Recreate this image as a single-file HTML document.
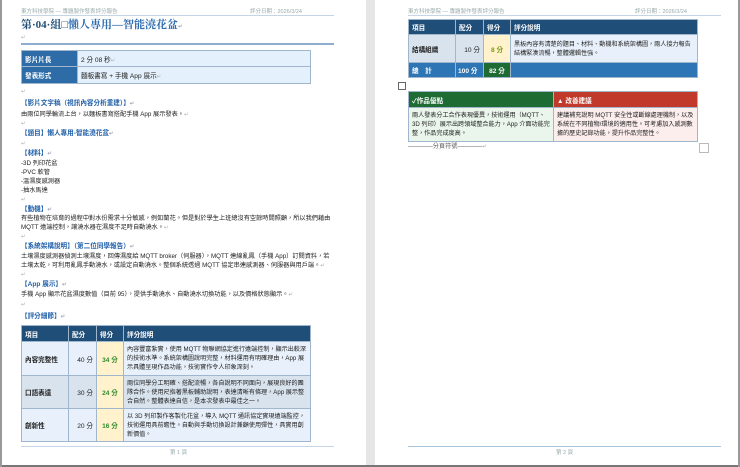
<!DOCTYPE html>
<html><head><meta charset="utf-8"><style>
*{margin:0;padding:0;box-sizing:border-box}
body{width:740px;height:467px;background:#e6e6e6;position:relative;overflow:hidden;font-family:"Liberation Sans","Noto Sans CJK TC",sans-serif;color:#222}
.pg{position:absolute;top:0;height:465px;background:#fff}
.a{position:absolute;white-space:nowrap}
.t{font-size:6.2px;line-height:8px;color:#222}
.h{font-size:6.6px;line-height:8px;font-weight:bold;color:#1f5fa8}
.hd{font-size:5.5px;color:#9aa}
.ln{position:absolute;height:1px;background:#a9c3dc}
.pm{color:#aab;font-size:5.5px}
table{border-collapse:collapse;position:absolute;font-size:6.6px;table-layout:fixed}
td{border:1px solid #9fb6cc;padding:0 3px;vertical-align:middle;white-space:nowrap;overflow:hidden}
td.w{white-space:normal;font-size:6.1px;line-height:9px;font-weight:normal}
.nv{background:#1f4e79;color:#fff;font-weight:bold}
.g{color:#2e8b2e;font-weight:bold;text-align:center;background:#fff2cc}
.sq{position:absolute;width:10px;height:10px;border:1px solid #bbb}
</style></head><body>
<div style="position:absolute;left:0;top:465px;width:740px;height:2px;background:#777"></div>
<div style="position:absolute;left:0;top:0;width:2px;height:467px;background:#999"></div>
<div style="position:absolute;left:738px;top:0;width:2px;height:467px;background:#999"></div>

<!-- PAGE 1 -->
<div class="pg" style="left:2px;width:364px"></div>
<div class="a hd" style="left:21px;top:7px">東方科技學院 — 專題製作發表評分報告</div>
<div class="a hd" style="left:250px;top:7px">評分日期：2026/3/24</div>
<div class="ln" style="left:21px;top:15px;width:313px;background:#c5d5e5"></div>
<div class="a" style="left:21px;top:18px;font-size:11px;line-height:14px;font-weight:bold;color:#1f4e79;font-family:'Liberation Serif','Noto Serif CJK SC',serif">第·04·組□<span style="color:#2e6cb0">懶人專用—智能澆花盆</span><span class="pm">↵</span></div>
<div class="a pm" style="left:21px;top:35px">↵</div>
<div class="ln" style="left:21px;top:43px;width:313px;height:2px;background:#8fadcf"></div>
<table style="left:21px;top:50px;width:290px">
<col style="width:56px"><col>
<tr style="height:16px"><td style="background:#2e6ca8;color:#fff;font-weight:bold">影片片長</td><td style="background:#e4f0fb">2 分 08 秒<span class="pm">↵</span></td></tr>
<tr style="height:17px"><td style="background:#2e6ca8;color:#fff;font-weight:bold">發表形式</td><td style="background:#e4f0fb">麵板書寫 + 手機 App 展示<span class="pm">↵</span></td></tr>
</table>
<div class="a pm" style="left:21px;top:89px">↵</div>
<div class="a h" style="left:21px;top:100px">【影片文字稿（視訊內容分析重建）】<span class="pm">↵</span></div>
<div class="a t" style="left:21px;top:111px">由兩位同學輪流上台，以麵板書寫搭配手機 App 展示發表。<span class="pm">↵</span></div>
<div class="a pm" style="left:21px;top:121px">↵</div>
<div class="a h" style="left:21px;top:130px">【題目】懶人專用-智能澆花盆<span class="pm">↵</span></div>
<div class="a pm" style="left:21px;top:141px">↵</div>
<div class="a h" style="left:21px;top:150px">【材料】<span class="pm">↵</span></div>
<div class="a t" style="left:21px;top:160px">-3D 列印花盆</div>
<div class="a t" style="left:21px;top:169px">-PVC 軟管</div>
<div class="a t" style="left:21px;top:178px">-溫濕度感測器</div>
<div class="a t" style="left:21px;top:187px">-抽水馬達</div>
<div class="a pm" style="left:21px;top:197px">↵</div>
<div class="a h" style="left:21px;top:206px">【動機】<span class="pm">↵</span></div>
<div class="a t" style="left:21px;top:215px">有些植物在培育的過程中對水份需求十分敏感，例如蘭花。但是對於學生上班總沒有空餘時間照顧，所以我們藉由</div>
<div class="a t" style="left:21px;top:224px">MQTT 遠端控制，讓澆水器在濕度不足時自動澆水。<span class="pm">↵</span></div>
<div class="a pm" style="left:21px;top:234px">↵</div>
<div class="a h" style="left:21px;top:243px">【系統架構說明】（第二位同學報告）<span class="pm">↵</span></div>
<div class="a t" style="left:21px;top:253px">土壤濕度感測器偵測土壤濕度，回傳濕度給 MQTT broker（伺服器），MQTT 連線亂鳳（手機 App）訂閱資料，若</div>
<div class="a t" style="left:21px;top:262px">土壤太乾，可利用亂鳳手動澆水，或設定自動澆水。整個系統透過 MQTT 協定串連感測器、伺服器與用戶端。<span class="pm">↵</span></div>
<div class="a pm" style="left:21px;top:272px">↵</div>
<div class="a h" style="left:21px;top:281px">【App 展示】<span class="pm">↵</span></div>
<div class="a t" style="left:21px;top:291px">手機 App 顯示花盆濕度數值（目前 95），提供手動澆水、自動澆水切換功能，以及價格狀態顯示。<span class="pm">↵</span></div>
<div class="a pm" style="left:21px;top:302px">↵</div>
<div class="a h" style="left:21px;top:313px">【評分細節】<span class="pm">↵</span></div>
<table style="left:21px;top:325px;width:290px">
<col style="width:47px"><col style="width:28px"><col style="width:27px"><col>
<tr style="height:16px" class="nv"><td>項目</td><td>配分</td><td>得分</td><td>評分說明</td></tr>
<tr style="height:34px;background:#e8f1fb"><td style="font-weight:bold">內容完整性</td><td style="text-align:right">40 分</td><td class="g">34 分</td><td class="w">內容豐富紮實，使用 MQTT 物聯網協定進行遠端控制，顯示出較深的技術水準。系統架構圖說明完整，材料運用有明確理由，App 展示具體呈現作品功能，技術實作令人印象深刻。</td></tr>
<tr style="height:33px;background:#d8e3ee"><td style="font-weight:bold">口語表達</td><td style="text-align:right">30 分</td><td class="g">24 分</td><td class="w">兩位同學分工明確、搭配流暢，各自說明不同面向，展現良好的團隊合作。使用尺指著黑板輔助說明，表達清晰有條理，App 展示整合自然。整體表達自信，是本次發表中最佳之一。</td></tr>
<tr style="height:33px;background:#e8f1fb"><td style="font-weight:bold">創新性</td><td style="text-align:right">20 分</td><td class="g">16 分</td><td class="w">以 3D 列印製作客製化花盆，導入 MQTT 通訊協定實現遠端監控，技術運用具前瞻性。自動與手動切換設計兼顧使用彈性，具實用創新價值。</td></tr>
</table>
<div class="ln" style="left:21px;top:446px;width:313px;background:#c5d5e5"></div>
<div class="a hd" style="left:170px;top:448px">第 1 頁</div>

<!-- PAGE 2 -->
<div class="pg" style="left:375px;width:363px"></div>
<div class="a hd" style="left:408px;top:7px">東方科技學院 — 專題製作發表評分報告</div>
<div class="a hd" style="left:635px;top:7px">評分日期：2026/3/24</div>
<div class="ln" style="left:408px;top:15px;width:313px;background:#c5d5e5"></div>
<table style="left:408px;top:19px;width:290px">
<col style="width:47px"><col style="width:28px"><col style="width:27px"><col>
<tr style="height:15px" class="nv"><td>項目</td><td>配分</td><td>得分</td><td>評分說明</td></tr>
<tr style="height:28px;background:#d8e3ee"><td style="font-weight:bold">結構組織</td><td style="text-align:right">10 分</td><td class="g" style="color:#7a9a10">8 分</td><td class="w" style="background:#e8f1fb">黑板內容有清楚的題目、材料、動機和系統架構圖，兩人接力報告結構緊湊流暢，整體邏輯性強。</td></tr>
<tr style="height:15px;background:#2e75b6;color:#fff;font-weight:bold"><td>總　計</td><td style="padding:0 2px">100 分</td><td style="background:#1e6b34;text-align:center">82 分</td><td></td></tr>
</table>
<div class="sq" style="left:398px;top:82px;width:8px;height:8px;border-color:#666"></div>
<table style="left:408px;top:91px;width:290px">
<col style="width:145px"><col>
<tr style="height:16px;color:#fff;font-weight:bold"><td style="background:#1e6b34">✓作品優點</td><td style="background:#c0392b">▲ 改善建議</td></tr>
<tr style="height:34px"><td class="w" style="background:#eaf5ec">兩人發表分工合作表現優異，技術運用（MQTT、3D 列印）展示出跨領域整合能力，App 介面功能完整，作品完成度高。</td><td class="w" style="background:#fdeeee">建議補充說明 MQTT 安全性或斷線處理機制，以及系統在不同植物/環境的適用性。可考慮加入感測數據的歷史記錄功能，提升作品完整性。</td></tr>
</table>
<div class="a t" style="left:408px;top:143px;color:#555">————分頁符號————<span class="pm">↵</span></div>
<div class="sq" style="left:699px;top:143px"></div>
<div class="ln" style="left:408px;top:446px;width:313px;background:#a9c8e0"></div>
<div class="a hd" style="left:556px;top:448px">第 2 頁</div>
</body></html>
